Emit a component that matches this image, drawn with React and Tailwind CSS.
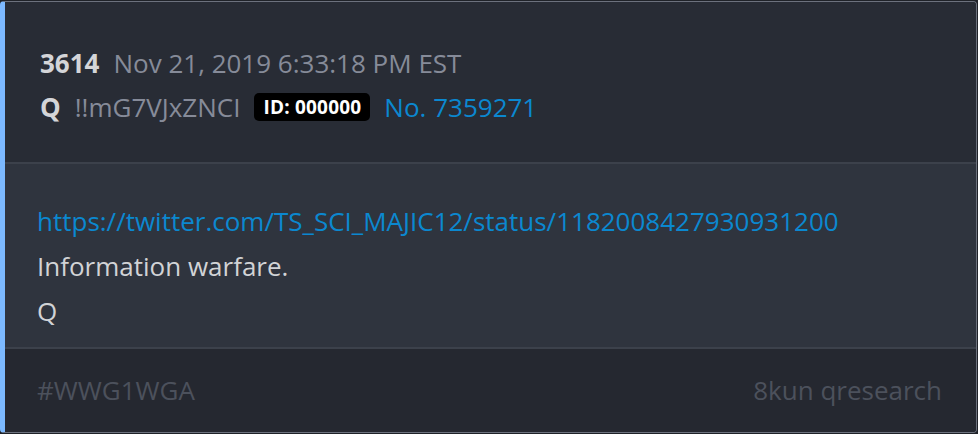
export default function App() {
  return (
    <div className="w-[978px] h-[434px] bg-[#1f2228] pt-[1px] pr-[1px] pb-[1px]" style={{ fontFamily: '"Open Sans", sans-serif' }}>
      <div className="h-full flex flex-col rounded-[4px] overflow-hidden border border-[#6c717d] border-l-[5px] border-l-[#7cb9ff] bg-[#282c35]">
        {/* header */}
        <div className="pl-[35px] pt-[39px] pb-[33px] bg-[#282c35]">
          <div className="flex items-center gap-[14px] h-[44px] text-[26px]">
            <span className="font-bold text-[#d4d5d8]">3614</span>
            <span className="text-[#868b99]">Nov 21, 2019 6:33:18 PM EST</span>
          </div>
          <div className="flex items-center gap-[14px] h-[44px] text-[26px]">
            <span className="font-bold text-[#d4d5d8]">Q</span>
            <span className="text-[#868b99]">!!mG7VJxZNCI</span>
            <span className="bg-black text-white font-bold text-[19px] tracking-[0.2px] rounded-[5px] px-[9px] h-[28px] leading-[28px]">ID: 000000</span>
            <span className="text-[#0b88d0]">No. 7359271</span>
          </div>
        </div>
        <div className="h-[2px] bg-[#3c414b]" />
        {/* body */}
        <div className="pl-[32px] pt-[35px] pb-[13px] bg-[#2f343e] text-[26px] leading-[45px]">
          <a className="block text-[#0b88d0]">https://twitter.com/TS_SCI_MAJIC12/status/1182008427930931200</a>
          <p className="text-[#d2d3d6]">Information warfare.</p>
          <p className="text-[#d2d3d6]">Q</p>
        </div>
        <div className="h-[2px] bg-[#3c414b]" />
        {/* footer */}
        <div className="flex-1 flex items-center justify-between pl-[32px] pr-[34px] bg-[#252830] text-[26px] text-[#4c515c]">
          <span>#WWG1WGA</span>
          <span>8kun qresearch</span>
        </div>
      </div>
    </div>
  )
}
